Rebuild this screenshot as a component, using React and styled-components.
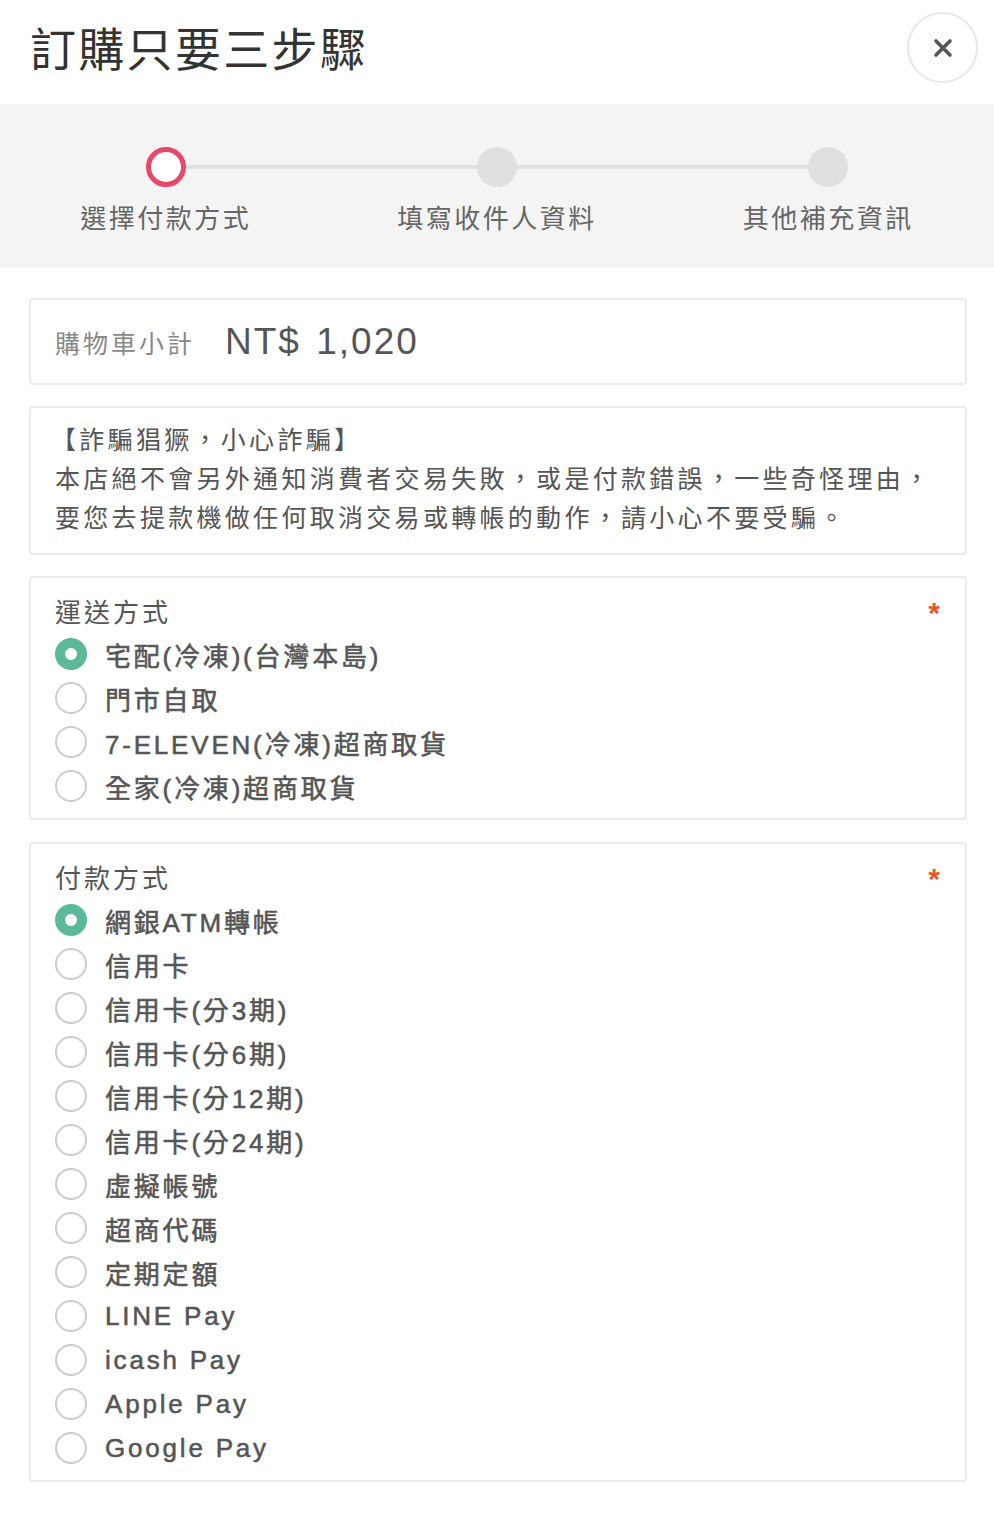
import React, { useState } from 'react';
import styled, { createGlobalStyle } from 'styled-components';

const GlobalStyle = createGlobalStyle`
  body {
    margin: 0;
    background: #fff;
    font-family: "Liberation Sans", "Noto Sans CJK TC", sans-serif;
    color: #555;
  }
`;

const Page = styled.div`
  width: 994px;
  padding-bottom: 52px;
`;

const Header = styled.header`
  height: 104px;
  display: flex;
  align-items: center;
  justify-content: space-between;
  padding: 0 16px 0 30px;
  box-sizing: border-box;
`;

const Title = styled.h1`
  margin: 0;
  font-size: 46px;
  font-weight: 400;
  letter-spacing: 2.3px;
  color: #333;
  line-height: 1;
  padding-bottom: 4px;
`;

const CloseButton = styled.button`
  align-self: flex-start;
  margin-top: 12px;
  width: 71px;
  height: 71px;
  border-radius: 50%;
  border: 2px solid #e8e8e8;
  background: #fff;
  display: flex;
  align-items: center;
  justify-content: center;
  padding: 0;
  cursor: pointer;
`;

const Steps = styled.div`
  height: 163px;
  background: #f4f4f4;
  display: grid;
  grid-template-columns: repeat(3, 1fr);
`;

const Step = styled.div`
  position: relative;
  display: flex;
  flex-direction: column;
  align-items: center;
  padding-top: 43px;

  /* connector to the next step */
  &::after {
    content: '';
    display: ${p => (p.$last ? 'none' : 'block')};
    position: absolute;
    top: 61px;
    left: 50%;
    width: 100%;
    height: 4px;
    background: #e0e0e0;
  }
`;

const Dot = styled.span`
  position: relative;
  z-index: 1;
  width: 40px;
  height: 40px;
  box-sizing: border-box;
  border-radius: 50%;
  background: ${p => (p.$active ? '#fff' : '#e0e0e0')};
  border: ${p => (p.$active ? '5px solid #e8476a' : 'none')};
`;

const StepLabel = styled.div`
  margin-top: 15px;
  font-size: 26px;
  letter-spacing: 2.5px;
  color: #666;
  line-height: 34px;
`;

const Content = styled.main`
  padding: 31px 27px 0 29px;
  display: flex;
  flex-direction: column;
  gap: 21px;
`;

const Card = styled.section`
  border: 2px solid #ebebeb;
  border-radius: 4px;
  box-sizing: border-box;
`;

const CartCard = styled(Card)`
  height: 87px;
  display: flex;
  align-items: center;
  padding: 0 24px;
`;

const CartLabel = styled.span`
  font-size: 25px;
  letter-spacing: 3px;
  color: #888;
`;

const CartAmount = styled.span`
  margin-left: 30px;
  font-size: 37px;
  letter-spacing: 2px;
  color: #555;
  word-spacing: 3px;
`;

const Notice = styled(Card)`
  padding: 13px 20px 15px 24px;
  font-size: 25px;
  letter-spacing: 3.3px;
  line-height: 39px;
  color: #555;
  white-space: nowrap;
`;

const NoticeHead = styled.div`
  margin-left: -4px;
`;

const OptionCard = styled(Card)`
  padding: 10px 25px 10px 24px;

  & + & {
    margin-top: 1px;
  }
`;

const OptionHead = styled.div`
  height: 44px;
  display: flex;
  align-items: center;
  justify-content: space-between;
  font-size: 26px;
  letter-spacing: 3px;
  color: #555;
`;

const Required = styled.span`
  color: #e8562a;
  font-size: 30px;
  font-weight: 700;
  letter-spacing: 0;
  align-self: flex-start;
  margin-top: 8px;
`;

const Option = styled.label`
  height: 44px;
  display: flex;
  align-items: center;
  cursor: pointer;
`;

const Radio = styled.span`
  width: 32px;
  height: 32px;
  box-sizing: border-box;
  border-radius: 50%;
  background: #fff;
  border: ${p => (p.$checked ? '10px solid #5bb899' : '2px solid #cccccc')};
  flex-shrink: 0;
`;

const OptionText = styled.span`
  margin-left: 18px;
  font-size: 26px;
  font-weight: 400;
  letter-spacing: 2.8px;
  color: #555;
  -webkit-text-stroke: 0.55px #555;
`;

const STEPS = ['選擇付款方式', '填寫收件人資料', '其他補充資訊'];

const SHIPPING = [
  '宅配(冷凍)(台灣本島)',
  '門市自取',
  '7-ELEVEN(冷凍)超商取貨',
  '全家(冷凍)超商取貨'
];

const PAYMENT = [
  '網銀ATM轉帳',
  '信用卡',
  '信用卡(分3期)',
  '信用卡(分6期)',
  '信用卡(分12期)',
  '信用卡(分24期)',
  '虛擬帳號',
  '超商代碼',
  '定期定額',
  'LINE Pay',
  'icash Pay',
  'Apple Pay',
  'Google Pay'
];

// one bordered group of radio options
const OptionGroup = ({ title, options, value, onChange }) => (
  <OptionCard>
    <OptionHead>
      <span>{title}</span>
      <Required>*</Required>
    </OptionHead>
    {options.map(opt => (
      <Option key={opt} onClick={() => onChange(opt)}>
        <Radio $checked={value === opt} />
        <OptionText>{opt}</OptionText>
      </Option>
    ))}
  </OptionCard>
);

export default function App() {
  const [shipping, setShipping] = useState(SHIPPING[0]);
  const [payment, setPayment] = useState(PAYMENT[0]);

  return (
    <Page>
      <GlobalStyle />
      <Header>
        <Title>訂購只要三步驟</Title>
        <CloseButton aria-label="close">
          <svg width="20" height="20" viewBox="0 0 20 20">
            <path
              d="M3 3 L17 17 M17 3 L3 17"
              stroke="#555"
              strokeWidth="3.6"
              strokeLinecap="round"
            />
          </svg>
        </CloseButton>
      </Header>

      <Steps>
        {STEPS.map((s, i) => (
          <Step key={s} $last={i === STEPS.length - 1}>
            <Dot $active={i === 0} />
            <StepLabel>{s}</StepLabel>
          </Step>
        ))}
      </Steps>

      <Content>
        <CartCard>
          <CartLabel>購物車小計</CartLabel>
          <CartAmount>NT$ 1,020</CartAmount>
        </CartCard>

        <Notice>
          <NoticeHead>【詐騙猖獗，小心詐騙】</NoticeHead>
          本店絕不會另外通知消費者交易失敗，或是付款錯誤，一些奇怪理由，
          <br />
          要您去提款機做任何取消交易或轉帳的動作，請小心不要受騙。
        </Notice>

        <OptionGroup
          title="運送方式"
          options={SHIPPING}
          value={shipping}
          onChange={setShipping}
        />
        <OptionGroup
          title="付款方式"
          options={PAYMENT}
          value={payment}
          onChange={setPayment}
        />
      </Content>
    </Page>
  );
}
